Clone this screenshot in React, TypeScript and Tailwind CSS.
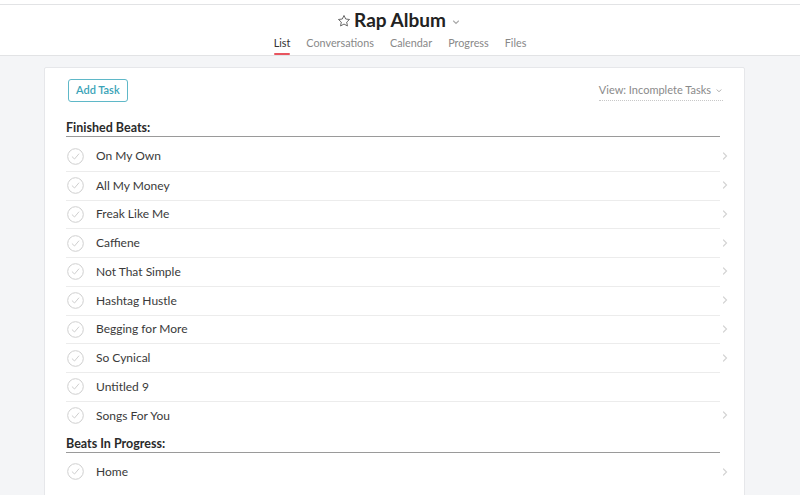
const finished = [
  { name: "On My Own", more: true },
  { name: "All My Money", more: true },
  { name: "Freak Like Me", more: true },
  { name: "Caffiene", more: true },
  { name: "Not That Simple", more: true },
  { name: "Hashtag Hustle", more: true },
  { name: "Begging for More", more: true },
  { name: "So Cynical", more: true },
  { name: "Untitled 9", more: false },
  { name: "Songs For You", more: true },
];

const inProgress = [{ name: "Home", more: true }];

const tabs = ["List", "Conversations", "Calendar", "Progress", "Files"];

function CheckCircle() {
  return (
    <svg width="17" height="17" viewBox="0 0 17 17" fill="none">
      <circle cx="8.5" cy="8.5" r="7.8" stroke="#cfcfcf" strokeWidth="1" />
      <path d="M5.2 8.8 L7.5 11 L11.8 6" stroke="#cfcfcf" strokeWidth="1" strokeLinecap="round" strokeLinejoin="round" />
    </svg>
  );
}

function Chevron() {
  return (
    <svg width="6" height="8" viewBox="0 0 6 8" fill="none">
      <path d="M1.5 1 L4.5 4 L1.5 7" stroke="#d4d4d4" strokeWidth="1.2" strokeLinecap="round" />
    </svg>
  );
}

function TaskRow({ name, more }: { name: string; more: boolean }) {
  return (
    <div className="flex items-center">
      <div className="flex h-[28.75px] w-[654px] items-center">
        <span className="ml-[1px]">
          <CheckCircle />
        </span>
        <span className="ml-[12px] text-[12px] text-[#3a3a3a]">{name}</span>
      </div>
      <div className="flex w-[24px] justify-end pr-[16px]">{more && <Chevron />}</div>
    </div>
  );
}

function Section({ title, tasks }: { title: string; tasks: { name: string; more: boolean }[] }) {
  return (
    <div>
      <div className="w-[654px] border-b border-[#9a9a9a] pt-[6px] text-[12.5px] font-bold leading-[16px] text-[#2a2a2a]">
        {title}
      </div>
      <div className="mt-[5px] w-[678px] [&>*+*>div:first-child]:border-t [&>*+*>div:first-child]:border-[#ececec]">
        {tasks.map((t) => (
          <TaskRow key={t.name} name={t.name} more={t.more} />
        ))}
      </div>
    </div>
  );
}

export default function App() {
  return (
    <div className="h-[495px] overflow-hidden bg-[#f4f5f7] font-['Lato',sans-serif]">
      {/* header */}
      <div className="h-[4px] bg-white" />
      <div className="border-y border-[#e2e3e5] bg-white">
        <div className="flex h-[30px] items-center justify-center pt-[1px] pl-[2px]">
          <svg width="14" height="14" viewBox="0 0 24 24" fill="none" className="mr-[3px] -ml-[4px]">
            <path
              d="M12 2.5 L14.9 8.6 L21.5 9.4 L16.6 13.9 L17.9 20.5 L12 17.2 L6.1 20.5 L7.4 13.9 L2.5 9.4 L9.1 8.6 Z"
              stroke="#555"
              strokeWidth="1.5"
              strokeLinejoin="round"
            />
          </svg>
          <span className="text-[19px] font-bold text-[#222]">Rap Album</span>
          <svg width="10" height="10" viewBox="0 0 10 10" fill="none" className="ml-[5px] mt-[2px]">
            <path d="M2.5 4 L5 6.5 L7.5 4" stroke="#aaa" strokeWidth="1.1" strokeLinecap="round" />
          </svg>
        </div>
        <div className="flex h-[20px] items-start justify-center gap-[16px]">
          {tabs.map((t, i) => (
            <div key={t} className="flex flex-col items-center">
              <span className={`text-[10.8px] leading-[16px] ${i === 0 ? "text-[#333]" : "text-[#888]"}`}>{t}</span>
              {i === 0 && <span className="mt-[2px] h-[2px] w-[16px] rounded bg-[#e8555f]" />}
            </div>
          ))}
        </div>
      </div>

      {/* card */}
      <div className="ml-[44px] mt-[11px] min-h-[460px] w-[701px] rounded-[2px] border border-[#e6e7ea] bg-white pl-[21px] pt-[11px]">
        <div className="flex w-[657px] items-start justify-between">
          <button className="ml-[2px] h-[23px] rounded-[3px] border border-[#5fb8c8] px-[7px] text-[11px] font-semibold text-[#3aa3b7]">
            Add Task
          </button>
          <div className="mt-[2px] flex items-center border-b border-dotted border-[#c8c8c8] pt-[1px] pb-[1px] text-[11px] text-[#8a8a8a]">
            View: Incomplete Tasks
            <svg width="8" height="8" viewBox="0 0 10 10" fill="none" className="ml-[4px] mt-[1px]">
              <path d="M2.5 3.5 L5 6 L7.5 3.5" stroke="#aaa" strokeWidth="1.2" strokeLinecap="round" />
            </svg>
          </div>
        </div>
        <div className="mt-[12px]">
          <Section title="Finished Beats:" tasks={finished} />
          <Section title="Beats In Progress:" tasks={inProgress} />
        </div>
      </div>
    </div>
  );
}
